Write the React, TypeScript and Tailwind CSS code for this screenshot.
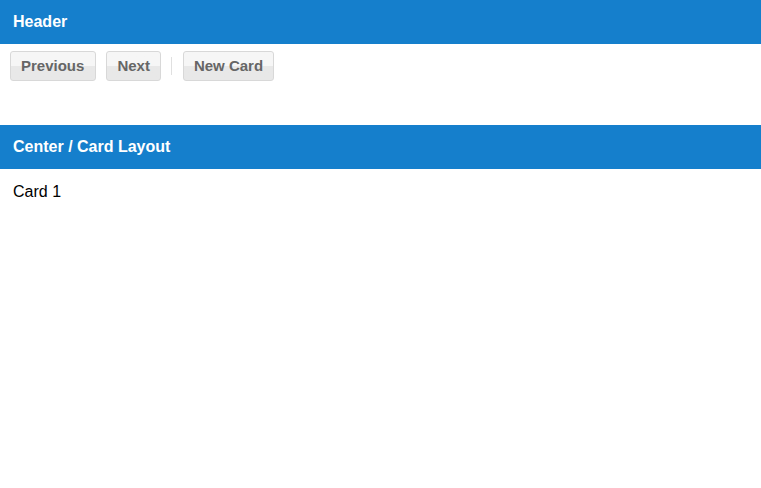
export default function App() {
  const btn =
    "h-[30px] px-[10px] rounded-[3px] border border-[#d8d8d8] bg-gradient-to-b from-[#f6f6f6] from-50% to-[#e8e8e8] to-50% text-[15px] font-bold text-[#666]";
  return (
    <div className="min-h-[488px] bg-white font-['Liberation_Sans',Arial,sans-serif]">
      <div className="h-[44px] bg-[#157fcc] flex items-center px-[13px] text-[16px] font-bold text-white">
        Header
      </div>
      <div className="flex items-center h-[44px] px-[10px] pt-[7px] pb-[7px]">
        <button className={btn + " pr-[11px]"}>Previous</button>
        <button className={btn + " ml-[10px]"}>Next</button>
        <div className="ml-[10px] mr-[11px] h-[18px] w-px bg-[#e0e0e0]" />
        <button className={btn}>New Card</button>
      </div>
      <div className="h-[37px]" />
      <div className="h-[44px] bg-[#157fcc] flex items-center px-[13px] text-[16px] font-bold text-white">
        Center / Card Layout
      </div>
      <div className="px-[13px] pt-[11px] text-[16px] text-black">Card 1</div>
    </div>
  );
}
